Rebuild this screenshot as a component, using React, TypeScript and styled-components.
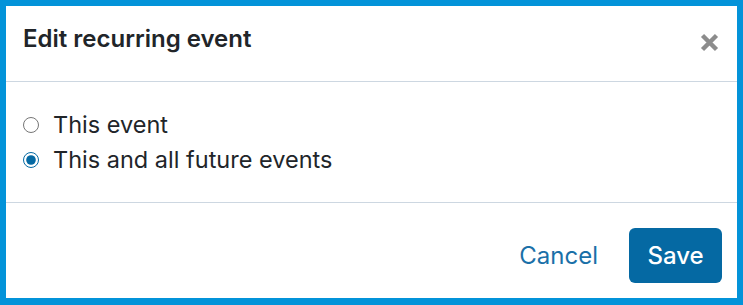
import styled, { createGlobalStyle } from "styled-components";
import { useState } from "react";

const GlobalStyle = createGlobalStyle`
  html, body {
    margin: 0;
    padding: 0;
    background: #ffffff;
  }
  * {
    box-sizing: border-box;
  }
`;

const options = [
  { id: "this", label: "This event" },
  { id: "future", label: "This and all future events" },
];

const App: React.FC = () => {
  const [choice, setChoice] = useState("future");

  return (
    <>
      <GlobalStyle />
      <Frame>
        <Header>
          <Title>Edit recurring event</Title>
          <CloseButton aria-label="Close">
            <svg width="19" height="19" viewBox="0 0 19 19">
              <path
                d="M2.5 2.5 L16.5 16.5 M16.5 2.5 L2.5 16.5"
                stroke="#8c8c8c"
                strokeWidth="4.4"
              />
            </svg>
          </CloseButton>
        </Header>
        <Body>
          {options.map((o) => (
            <OptionRow key={o.id}>
              <Radio
                type="radio"
                name="recurring"
                checked={choice === o.id}
                onChange={() => setChoice(o.id)}
              />
              <OptionText>{o.label}</OptionText>
            </OptionRow>
          ))}
        </Body>
        <Footer>
          <CancelButton>Cancel</CancelButton>
          <SaveButton>Save</SaveButton>
        </Footer>
      </Frame>
    </>
  );
};

export default App;

const Frame = styled.div`
  width: 743px;
  height: 305px;
  border-style: solid;
  border-color: #0393d9;
  border-width: 6px 6px 7px 6px;
  background: #ffffff;
  display: flex;
  flex-direction: column;
  font-family: Inter, "Liberation Sans", sans-serif;
  color: #212529;
`;

const Header = styled.div`
  height: 76px;
  flex-shrink: 0;
  display: flex;
  align-items: center;
  justify-content: space-between;
  padding: 0 18px 0 17px;
  border-bottom: 1px solid #cdd7e1;
`;

const Title = styled.h2`
  margin: -10px 0 0;
  font-size: 24px;
  font-weight: 600;
  line-height: 28px;
`;

const CloseButton = styled.button`
  border: none;
  background: none;
  padding: 0;
  width: 19px;
  height: 19px;
  display: flex;
  margin-top: -3px;
  cursor: pointer;
`;

const Body = styled.div`
  height: 121px;
  flex-shrink: 0;
  display: flex;
  flex-direction: column;
  justify-content: center;
  gap: 7px;
  padding: 0 17px;
  border-bottom: 1px solid #cdd7e1;
`;

const OptionRow = styled.label`
  display: flex;
  align-items: center;
  gap: 14px;
  cursor: pointer;
`;

const Radio = styled.input`
  margin: 0;
  width: 16px;
  height: 16px;
  accent-color: #0569a3;
`;

const OptionText = styled.span`
  font-size: 23.5px;
  line-height: 28px;
  font-weight: 400;
`;

const Footer = styled.div`
  flex: 1;
  display: flex;
  align-items: center;
  justify-content: flex-end;
  gap: 31px;
  padding: 10px 15px 0 0;
`;

const CancelButton = styled.button`
  border: none;
  background: none;
  padding: 0;
  font-family: inherit;
  font-size: 24px;
  color: #1a70a8;
  cursor: pointer;
`;

const SaveButton = styled.button`
  border: none;
  width: 93px;
  height: 55px;
  border-radius: 6px;
  background: #0569a3;
  color: #ffffff;
  font-family: inherit;
  font-size: 24px;
  font-weight: 500;
  cursor: pointer;
`;
